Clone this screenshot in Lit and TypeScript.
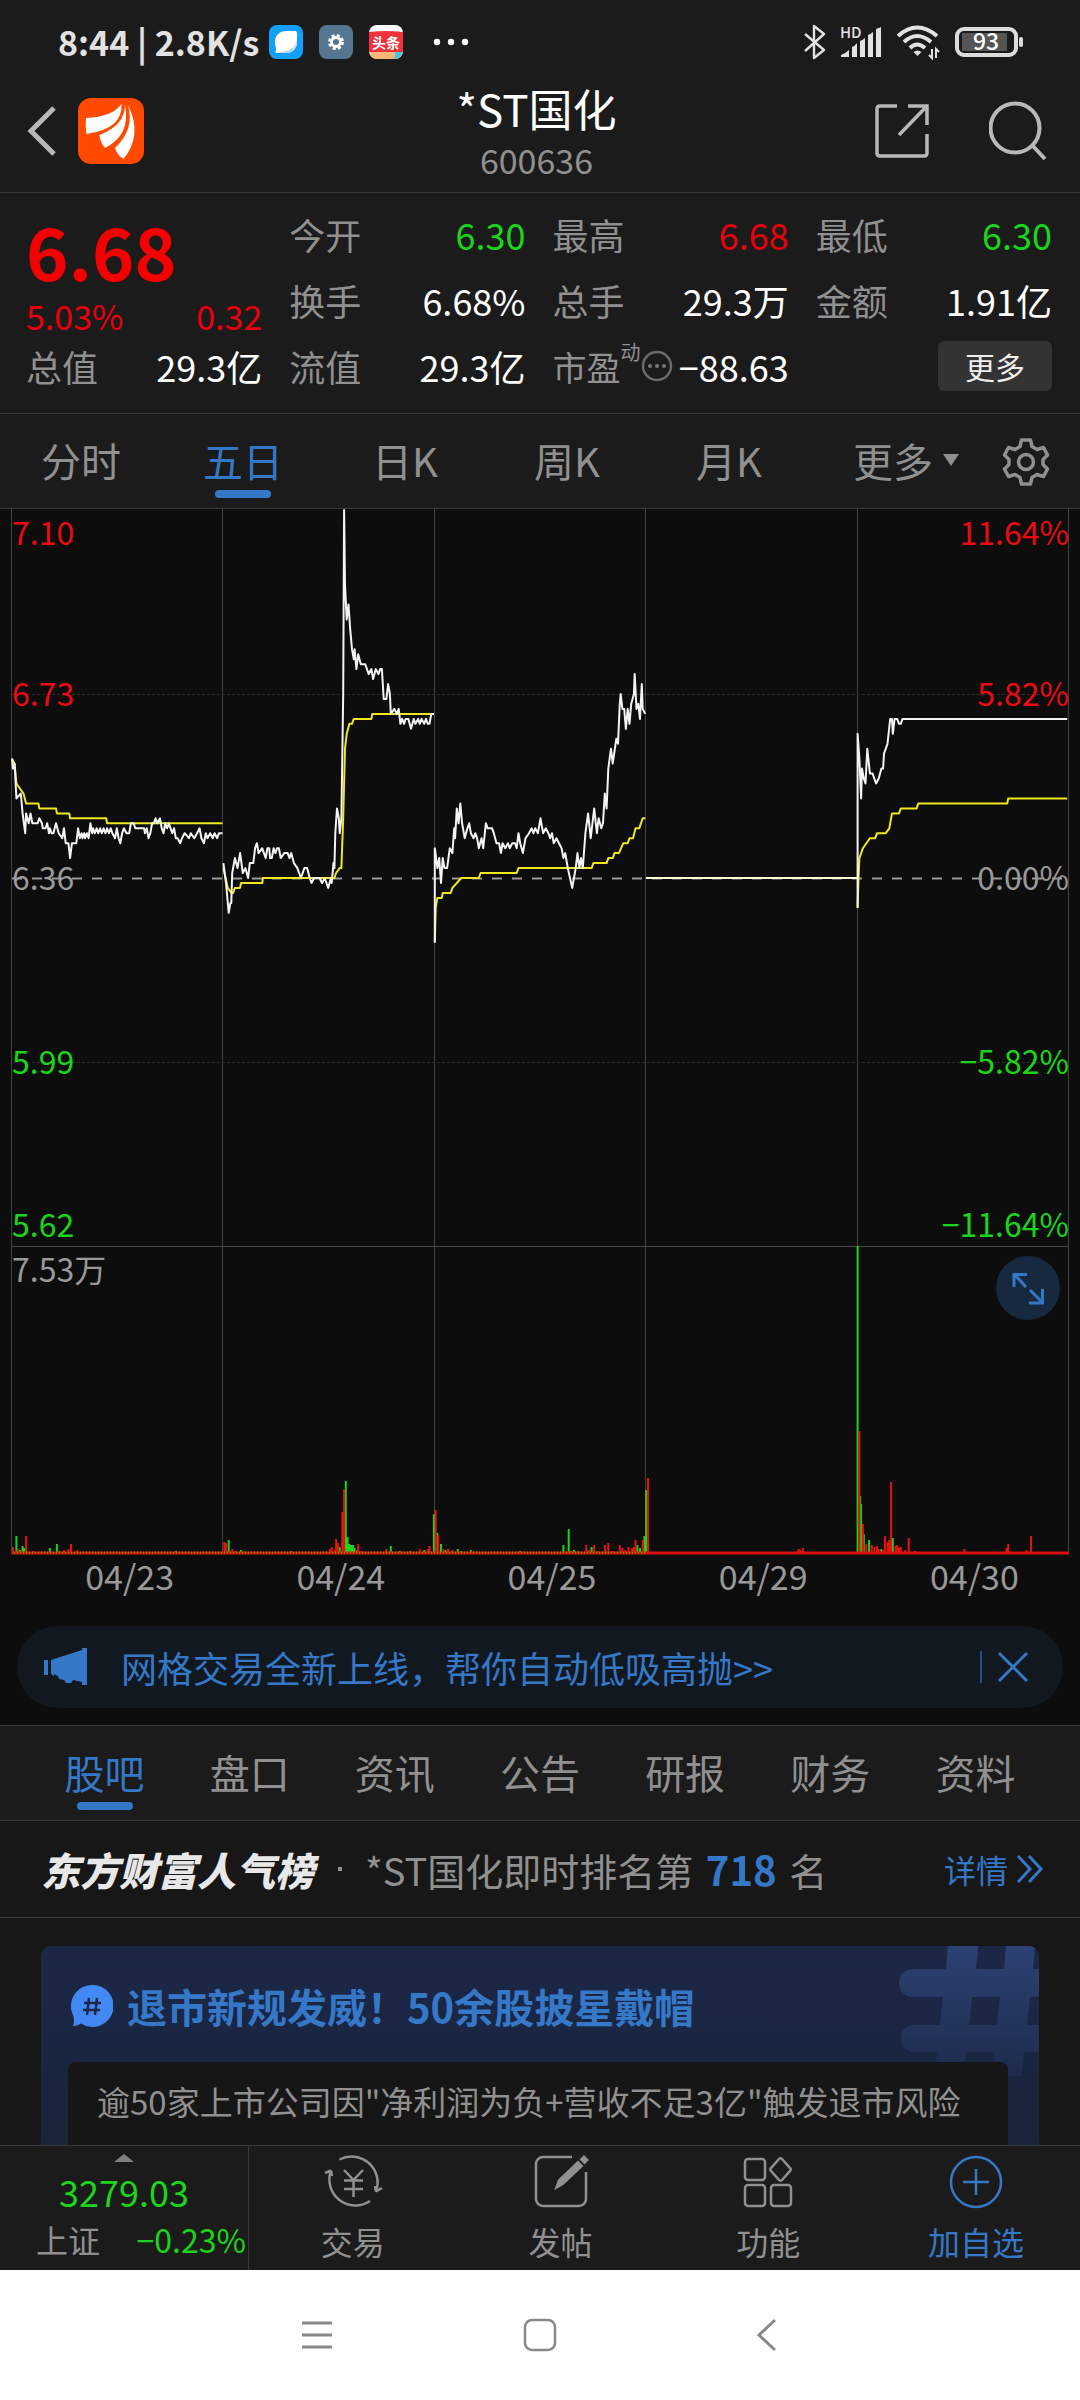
import { LitElement, html, svg, css } from "lit";
import { customElement, property } from "lit/decorators.js";
import { classMap } from "lit/directives/class-map.js";

type Point = [number, number];
type Bar = [number, number, "r" | "g"];

/* One entry for each trading day: [minute, ticks above the previous close]. */
const PRICE: Point[][] = [
  [
    [0, 24], [1, 22], [3, 23], [5, 16], [10, 17], [12, 13], [15, 9], [16, 13], [19, 11], [21, 13], [23, 11],
    [29, 11], [31, 12], [34, 11], [35, 10], [38, 10], [40, 11], [42, 9], [43, 10], [45, 9], [47, 9], [50, 11],
    [53, 9], [57, 8], [59, 10], [61, 7], [64, 7], [66, 4], [68, 7], [73, 7], [75, 10], [77, 8], [79, 9], [80, 8],
    [82, 9], [83, 8], [85, 9], [87, 8], [89, 11], [91, 9], [92, 10], [94, 9], [96, 10], [98, 9], [100, 10],
    [102, 9], [104, 10], [106, 9], [108, 10], [110, 9], [112, 10], [114, 9], [117, 8], [119, 10], [121, 8],
    [123, 7], [125, 9], [127, 10], [130, 9], [133, 9], [135, 11], [138, 11], [140, 10], [150, 10], [151, 9],
    [153, 10], [155, 8], [157, 9], [159, 11], [161, 11], [163, 12], [165, 11], [168, 12], [170, 10], [172, 9],
    [174, 11], [176, 10], [178, 11], [180, 10], [182, 9], [184, 10], [186, 8], [188, 8], [191, 7], [193, 8],
    [196, 9], [201, 8], [203, 9], [207, 8], [210, 9], [213, 10], [215, 8], [218, 7], [220, 9], [222, 8],
    [225, 9], [228, 8], [230, 9], [233, 8], [235, 9], [239, 9],
  ],
  [
    [0, 3], [3, -1], [4, -3], [6, -7], [8, -5], [9, -5], [10, 1], [13, 4], [16, 2], [19, 5], [22, 1], [25, 2],
    [28, 0], [30, 3], [34, 3], [36, 6], [38, 7], [40, 5], [44, 6], [48, 4], [50, 6], [52, 6], [53, 4], [55, 4],
    [57, 6], [59, 5], [61, 6], [63, 6], [65, 4], [69, 5], [73, 5], [75, 4], [77, 5], [80, 3], [84, 2], [88, 0],
    [92, 2], [95, 2], [98, 0], [100, -1], [103, 0], [109, 0], [112, -1], [115, 0], [119, -2], [122, 0],
    [123, -1], [125, 3], [126, 2], [127, 9], [129, 14], [131, 12], [132, 9], [134, 12], [136, 37], [137, 74],
    [138, 59], [140, 52], [142, 55], [144, 50], [146, 46], [148, 44], [149, 46], [151, 42], [153, 45],
    [156, 43], [161, 43], [165, 41], [168, 42], [170, 40], [173, 42], [176, 41], [178, 42], [180, 42],
    [182, 36], [185, 36], [187, 39], [189, 37], [190, 33], [194, 34], [197, 33], [199, 34], [201, 31],
    [203, 32], [205, 31], [207, 32], [210, 32], [213, 30], [216, 32], [218, 31], [221, 32], [223, 31],
    [225, 32], [228, 31], [230, 32], [232, 31], [234, 31], [236, 33], [239, 33],
  ],
  [
    [0, -13], [0, 6], [3, 2], [5, 4], [7, -1], [9, 4], [11, 2], [14, 2], [17, 6], [20, 5], [22, 10], [23, 8],
    [25, 14], [27, 11], [29, 15], [31, 11], [32, 10], [34, 8], [37, 10], [39, 11], [41, 9], [44, 8], [46, 9],
    [48, 8], [50, 6], [53, 8], [55, 6], [58, 11], [60, 10], [65, 10], [67, 9], [70, 7], [73, 7], [75, 5],
    [77, 7], [80, 6], [83, 7], [85, 6], [88, 7], [91, 7], [93, 6], [95, 9], [97, 7], [100, 5], [103, 8],
    [107, 9], [110, 10], [112, 9], [114, 10], [117, 9], [120, 12], [123, 9], [126, 10], [129, 9], [131, 8],
    [133, 9], [135, 7], [138, 8], [141, 7], [144, 6], [146, 4], [148, 5], [151, 2], [156, -2], [160, 2],
    [162, 5], [164, 2], [166, 4], [168, 2], [171, 9], [174, 13], [177, 8], [181, 14], [184, 9], [186, 12],
    [189, 10], [191, 11], [193, 17], [195, 14], [197, 22], [200, 26], [202, 23], [206, 28], [208, 27],
    [210, 35], [211, 37], [213, 34], [215, 34], [217, 30], [219, 34], [221, 31], [223, 35], [226, 37],
    [227, 41], [229, 34], [231, 35], [233, 32], [235, 39], [236, 34], [239, 33],
  ],
  [[0, 0], [240, 0]],
  [
    [0, -6], [0, 29], [2, 24], [4, 16], [5, 22], [7, 20], [9, 19], [11, 26], [14, 21], [17, 21], [19, 20],
    [21, 19], [24, 20], [27, 22], [29, 22], [30, 25], [32, 26], [34, 27], [37, 32], [39, 32], [40, 29],
    [42, 32], [45, 32], [47, 31], [49, 31], [51, 32], [238, 32],
  ],
];

const AVERAGE: Point[][] = [
  [
    [0, 24], [3, 23], [5, 19], [9, 18], [13, 17], [16, 15], [30, 15], [31, 14], [50, 14], [51, 13], [65, 13],
    [66, 12], [107, 12], [108, 11], [239, 11],
  ],
  [
    [0, 2], [5, -2], [9, -3], [11, -3], [13, -2], [19, -2], [20, -1], [44, -1], [45, 0], [126, 0], [128, 1],
    [132, 2], [134, 2], [136, 12], [138, 26], [140, 29], [143, 31], [146, 31], [148, 32], [168, 32], [169, 33],
    [239, 33],
  ],
  [
    [0, -13], [1, -6], [3, -4], [8, -4], [9, -3], [18, -3], [20, -2], [25, -1], [30, 0], [50, 0], [52, 1],
    [93, 1], [95, 2], [178, 2], [180, 3], [195, 3], [197, 4], [202, 4], [204, 5], [209, 5], [214, 7], [219, 7],
    [221, 8], [225, 8], [228, 10], [232, 10], [236, 12], [239, 12],
  ],
  [[0, 0], [240, 0]],
  [
    [0, -6], [1, 0], [2, 4], [6, 6], [10, 7], [14, 8], [20, 8], [22, 9], [32, 9], [36, 10], [39, 13], [47, 13],
    [49, 14], [67, 14], [69, 15], [170, 15], [171, 16], [238, 16],
  ],
];

/* Notable volume bars: [minute, height, colour]. */
const VOLUME: Bar[][] = [
  [
    [1, 7, "r"], [5, 18, "g"], [7, 5, "r"], [9, 4, "g"], [12, 8, "g"], [14, 6, "g"], [16, 18, "r"], [24, 3, "r"],
    [34, 2, "r"], [43, 6, "g"], [51, 10, "g"], [54, 3, "g"], [59, 4, "r"], [64, 5, "r"], [67, 10, "r"],
    [74, 4, "r"], [120, 2, "r"], [186, 3, "g"],
  ],
  [
    [1, 12, "r"], [3, 11, "r"], [6, 14, "g"], [10, 5, "r"], [14, 3, "r"], [20, 4, "g"], [39, 2, "r"],
    [77, 3, "g"], [121, 5, "r"], [123, 7, "r"], [126, 4, "r"], [128, 15, "r"], [130, 11, "r"], [132, 7, "g"],
    [135, 42, "r"], [137, 65, "r"], [139, 73, "g"], [141, 17, "g"], [143, 10, "g"], [145, 9, "g"], [147, 9, "g"],
    [149, 6, "g"], [151, 4, "r"], [153, 10, "r"], [156, 3, "r"], [173, 2, "g"], [185, 5, "r"], [190, 8, "g"],
    [200, 3, "g"], [212, 3, "g"], [223, 5, "r"], [228, 4, "g"], [232, 5, "r"], [234, 8, "r"], [239, 40, "g"],
  ],
  [
    [1, 44, "r"], [3, 21, "g"], [4, 19, "r"], [7, 10, "g"], [10, 5, "r"], [12, 4, "g"], [15, 5, "r"],
    [20, 4, "r"], [26, 5, "g"], [30, 3, "g"], [41, 4, "g"], [54, 2, "r"], [69, 2, "g"], [97, 3, "g"],
    [146, 9, "g"], [152, 25, "g"], [155, 3, "r"], [158, 4, "g"], [163, 3, "r"], [172, 9, "r"], [175, 4, "r"],
    [178, 7, "g"], [181, 9, "r"], [185, 3, "r"], [193, 9, "r"], [197, 11, "r"], [202, 3, "r"], [210, 9, "r"],
    [213, 6, "r"], [216, 4, "r"], [220, 7, "r"], [224, 6, "r"], [226, 7, "r"], [228, 14, "r"], [230, 9, "g"],
    [233, 6, "g"], [236, 14, "r"], [238, 18, "g"], [240, 64, "g"],
  ],
  [[2, 76, "r"], [60, 2, "r"], [173, 5, "r"], [175, 4, "r"], [178, 6, "r"]],
  [
    [0, 308, "g"], [2, 123, "r"], [3, 58, "g"], [4, 50, "g"], [6, 30, "r"], [7, 20, "g"], [10, 10, "r"],
    [13, 14, "g"], [16, 9, "r"], [19, 7, "r"], [22, 8, "r"], [24, 5, "r"], [27, 5, "g"], [29, 4, "r"],
    [31, 18, "r"], [34, 12, "r"], [36, 14, "r"], [38, 72, "r"], [40, 16, "g"], [43, 8, "r"], [45, 9, "r"],
    [47, 6, "r"], [49, 7, "r"], [54, 4, "r"], [58, 16, "r"], [65, 3, "r"], [121, 5, "r"], [169, 6, "r"],
    [171, 10, "r"], [192, 4, "r"], [197, 18, "r"],
  ],
];

const LEFT = 12;
const RIGHT = 1069;
const DAY = (RIGHT - LEFT) / 5;
const CLOSE_Y = 369;
const TICK = 368 / 74;
const PLOT_BOTTOM = 737;
const BASE = 1045;

const xOf = (day: number, minute: number) => LEFT + DAY * (day + minute / 240);

function tracePath(days: Point[][]): string {
  return days
    .map((points, day) =>
      points
        .map(([m, k], i) => `${i ? "L" : "M"}${xOf(day, m).toFixed(1)} ${(CLOSE_Y - k * TICK).toFixed(1)}`)
        .join(""),
    )
    .join("");
}

function volumePath(color: "r" | "g"): string {
  return VOLUME.map((bars, day) =>
    bars
      .filter((b) => b[2] === color)
      .map(([m, h]) => `M${xOf(day, m).toFixed(1)} ${BASE}v${-h}`)
      .join(""),
  ).join("");
}

@customElement("price-chart")
export class PriceChart extends LitElement {
  static styles = css`
    :host {
      display: block;
      background: #0d0d0d;
      color: #999;
    }
    .plot {
      position: relative;
    }
    .plot > svg {
      display: block;
      width: 100%;
      height: auto;
      overflow: visible;
    }
    text {
      font-size: 32px;
      fill: #999;
    }
    .up {
      fill: #ea0a12;
    }
    .down {
      fill: #1bd41b;
    }
    .end {
      text-anchor: end;
    }
    .expand {
      position: absolute;
      top: 747px;
      right: 20px;
      width: 64px;
      height: 64px;
      padding: 0;
      border: 0;
      border-radius: 50%;
      background: #17293f;
      display: grid;
      place-items: center;
    }
    .dates {
      display: grid;
      grid-template-columns: repeat(5, 1fr);
      padding-left: 24px;
      text-align: center;
      font-size: 34px;
      line-height: 40px;
    }
  `;

  render() {
    const columns = [0, 1, 2, 3, 4, 5].map((i) => Math.round(LEFT + DAY * i) - 0.5);
    return html`
      <div class="plot">
        <svg viewBox="0 0 1080 1047" role="img" aria-label="五日走势图">
          ${columns.map((x) => svg`<path d="M${x} 0V${BASE}" stroke="#424242" />`)}
          <path d="M12 185.5H1069M12 553.5H1069" stroke="#2c2c2c" stroke-dasharray="3 2" />
          <path d="M12 ${PLOT_BOTTOM + 0.5}H1069" stroke="#484848" />
          <path d="M12 369.5H1069" stroke="#999" stroke-width="2" stroke-dasharray="10 10" />
          <path d=${tracePath(AVERAGE)} fill="none" stroke="#f0e81e" stroke-width="2" stroke-linejoin="round" />
          <path d=${tracePath(PRICE)} fill="none" stroke="#f4f4f4" stroke-width="2" stroke-linejoin="round" />
          <path d="M${xOf(3, 0)} 369H${xOf(4, 0)}" stroke="#fbfbd8" stroke-width="2" />
          <path d=${volumePath("g")} stroke="#19d419" stroke-width="2" />
          <path d=${volumePath("r")} stroke="#e81010" stroke-width="2" />
          <path d="M12 1044H646" stroke="#cf1c08" stroke-width="3" />
          <path d="M14 1043.5H646" stroke="#7a8a10" stroke-width="2" stroke-dasharray="1 2" />
          <path d="M646 1044H1069" stroke="#d81010" stroke-width="3" />
          <text class="up" x="12" y="36">7.10</text>
          <text class="up" x="12" y="197">6.73</text>
          <text x="12" y="381">6.36</text>
          <text class="down" x="12" y="565">5.99</text>
          <text class="down" x="12" y="728">5.62</text>
          <text x="12" y="773">7.53万</text>
          <text class="up end" x="1069" y="36">11.64%</text>
          <text class="up end" x="1069" y="197">5.82%</text>
          <text class="end" x="1069" y="381">0.00%</text>
          <text class="down end" x="1069" y="565">−5.82%</text>
          <text class="down end" x="1069" y="728">−11.64%</text>
        </svg>
        <button class="expand" aria-label="全屏">
          <svg width="34" height="34" viewBox="0 0 34 34" fill="none" stroke="#3578c8" stroke-width="3">
            <path d="M3 16V3.500H16M4 4l11 12M18 32h13.500V18M31 31L19 19" />
          </svg>
        </button>
      </div>
      <div class="dates">
        ${["04/23", "04/24", "04/25", "04/29", "04/30"].map((d) => html`<span>${d}</span>`)}
      </div>
    `;
  }
}

@customElement("stock-tabs")
export class StockTabs extends LitElement {
  @property({ type: Array }) items: string[] = [];
  @property({ type: Number }) active = 0;
  @property({ type: Boolean, reflect: true }) chart = false;

  static styles = css`
    :host {
      display: block;
      background: #1b1b1b;
      border-bottom: 1px solid #3a3a3a;
    }
    .tabs {
      display: grid;
      grid-auto-flow: column;
      grid-auto-columns: 1fr;
      height: 94px;
      padding: 0 32px;
    }
    .tabs.chart {
      grid-auto-flow: row;
      grid-template-columns: repeat(5, 15%) 1fr auto;
      padding: 0;
    }
    button {
      display: flex;
      flex-direction: column;
      align-items: center;
      justify-content: flex-end;
      gap: 4px;
      padding: 0 0 10px;
      border: 0;
      background: none;
      color: #909090;
      font: inherit;
      font-size: 40px;
      line-height: 52px;
    }
    button::after {
      content: "";
      width: 56px;
      height: 8px;
      border-radius: 4px;
    }
    button.active {
      color: #3578c8;
    }
    button.active::after {
      background: #3578c8;
    }
    .more {
      display: flex;
      align-items: center;
      gap: 10px;
    }
    .gear::after {
      display: none;
    }
    .gear {
      justify-content: center;
      padding: 2px 30px 0 0;
    }
  `;

  render() {
    return html`
      <nav class=${classMap({ tabs: true, chart: this.chart })}>
        ${this.items.map(
          (t, i) => html`<button class=${classMap({ active: i === this.active })}>${t}</button>`,
        )}
        ${this.chart
          ? html`
              <button>
                <span class="more">
                  更多
                  <svg width="16" height="12" viewBox="0 0 16 12"><path d="M0 0H16L8 12Z" fill="#909090" /></svg>
                </span>
              </button>
              <button class="gear" aria-label="设置">
                <svg width="48" height="50" viewBox="0 0 48 50" fill="none" stroke="#909090" stroke-width="3.500" stroke-linejoin="round">
                  <path d="M19.500 3h9l1.500 6.500 5 3 6.500-2 4 7.500-4.500 4.500v5l4.500 4.500-4 7.500-6.500-2-5 3L28.500 47h-9L18 40.500l-5-3-6.500 2-4-7.500L7 27.500v-5L2.500 18l4-7.500 6.500 2 5-3z" />
                  <circle cx="24" cy="25" r="7.500" />
                </svg>
              </button>
            `
          : null}
      </nav>
    `;
  }
}

const ICONS = {
  trade: svg`
    <path d="M17.500 6.500A26 26 0 0 1 54 38.500M54 38.500l6-3.500M54 38.500L53 33M48 48A26 26 0 0 1 9 17.500M9 17.500L3 20M9 17.500L10 23" transform="translate(-1)" />
    <path d="M21 17l9.500 10L40 17M21 27.500H40M21 36H40M30.500 27V44" />`,
  post: svg`
    <path d="M41 4H12A7 7 0 0 0 5 11V46a7 7 0 0 0 7 7H48a7 7 0 0 0 7-7V19" />
    <path d="M25 35l3-8L47 9l4 4L32 31zM50 6.500l3-3 3.500 3.500-3 3z" fill="#909090" stroke-width="2" />`,
  functions: svg`
    <rect x="7" y="6" width="20" height="21" rx="3" />
    <rect x="7" y="32" width="20" height="21" rx="3" />
    <rect x="33" y="32" width="20" height="21" rx="3" />
    <path d="M41 6l-8 9a2 2 0 0 0 0 3l8 9a2 2 0 0 0 3 0l8-9a2 2 0 0 0 0-3l-8-9a2 2 0 0 0-3 0z" />`,
  add: svg`<circle cx="30" cy="29" r="25" /><path d="M30 16V42M17 29H43" />`,
};

@customElement("app-root")
export class AppRoot extends LitElement {
  static styles = css`
    :host {
      display: flex;
      flex-direction: column;
      min-height: 100vh;
      background: #171717;
      color: #909090;
      font-family: "Noto Sans CJK SC", "Noto Sans", sans-serif;
      font-size: 36px;
    }
    button {
      border: 0;
      padding: 0;
      background: none;
      color: inherit;
      font: inherit;
    }
    svg {
      display: block;
      flex: none;
    }
    a {
      color: #3578c8;
      text-decoration: none;
    }
    .status {
      display: flex;
      align-items: center;
      height: 84px;
      padding: 0 56px 0 58px;
      background: #1b1b1b;
      color: #e2e2e2;
    }
    .status svg {
      overflow: visible;
    }
    .clock {
      font-size: 34px;
      font-weight: 700;
      line-height: 40px;
      margin-right: auto;
      display: flex;
      align-items: center;
      gap: 16px;
    }
    .clock .net {
      margin-right: -6px;
    }
    .radio {
      display: flex;
      align-items: center;
      gap: 14px;
    }
    .header {
      display: grid;
      grid-template-columns: 1fr auto 1fr;
      height: 108px;
      padding: 0 33px 0 26px;
      background: #1b1b1b;
      border-bottom: 1px solid #3a3a3a;
    }
    .side {
      display: flex;
      align-items: center;
      gap: 20px;
      padding-bottom: 14px;
    }
    .side.tools {
      justify-content: flex-end;
      gap: 60px;
    }
    .title {
      text-align: center;
    }
    h1 {
      margin: 0;
      color: #fff;
      font-size: 44px;
      font-weight: 400;
      line-height: 48px;
    }
    .code {
      font-size: 34px;
      line-height: 56px;
    }
    .quote {
      display: grid;
      grid-template-columns: repeat(4, 1fr);
      grid-auto-rows: 66px;
      column-gap: 27px;
      margin: 0;
      padding: 8px 28px 14px 26px;
      background: #1b1b1b;
      border-bottom: 1px solid #3a3a3a;
    }
    .last {
      grid-row: span 2;
      color: #f50000;
    }
    .price {
      font-size: 72px;
      font-weight: 700;
      line-height: 98px;
    }
    .change {
      display: flex;
      justify-content: space-between;
      color: #e8000d;
      font-size: 34px;
      line-height: 34px;
    }
    .pair {
      display: flex;
      align-items: center;
      justify-content: space-between;
      white-space: nowrap;
    }
    dd {
      margin: 0;
      color: #fff;
    }
    dt {
      display: flex;
      align-items: center;
    }
    sup {
      align-self: flex-start;
      font-size: 20px;
      line-height: 20px;
    }
    .pe {
      font-size: 34px;
    }
    .up {
      color: #e8000d;
    }
    .down {
      color: #1bd41b;
    }
    .more {
      justify-self: end;
      align-self: center;
      width: 114px;
      height: 50px;
      border-radius: 6px;
      background: #333;
      color: #eee;
      font-size: 30px;
      line-height: 46px;
    }
    .promo {
      display: flex;
      align-items: center;
      height: 82px;
      margin: 30px 17px 17px;
      padding: 0 34px 0 27px;
      border-radius: 41px;
      background: #121820;
      color: #3578c8;
    }
    .promo a {
      flex: 1;
      margin-left: 33px;
      line-height: 46px;
    }
    .promo button {
      border-left: 2px solid #24507f;
      padding-left: 15px;
    }
    .market {
      background: #0d0d0d;
      border-bottom: 1px solid #3a3a3a;
    }
    .rank {
      display: flex;
      align-items: center;
      height: 96px;
      padding: 0 36px 0 41px;
      border-bottom: 1px solid #3a3a3a;
      font-size: 38px;
      white-space: nowrap;
    }
    .rank strong {
      color: #e8e8e8;
      font-size: 39px;
      font-weight: 900;
      font-style: italic;
    }
    .dot {
      width: 4px;
      height: 4px;
      margin: 0 23px 0 24px;
      background: #909090;
    }
    .rank b {
      margin: 0 4px;
      color: #3578c8;
      font-size: 40px;
      line-height: 40px;
    }
    .rank a {
      display: flex;
      align-items: center;
      gap: 8px;
      margin-left: auto;
      font-size: 32px;
    }
    .feed {
      flex: 1;
      display: flex;
      padding: 28px 41px 0;
    }
    .card {
      flex: 1;
      position: relative;
      display: flex;
      flex-direction: column;
      overflow: hidden;
      padding: 0 31px 0 27px;
      border-radius: 10px 10px 0 0;
      background: linear-gradient(#1c2747, #192640 60%, #1a2438);
    }
    .hash {
      position: absolute;
      top: 0;
      right: 0;
    }
    h2 {
      display: flex;
      align-items: center;
      gap: 14px;
      height: 116px;
      box-sizing: border-box;
      margin: 0;
      padding: 4px 0 0 3px;
      color: #3578c8;
      font-size: 40px;
      font-weight: 700;
      white-space: nowrap;
    }
    .summary {
      flex: 1;
      position: relative;
      margin: 0;
      padding: 14px 29px 18px;
      border-radius: 8px 8px 0 0;
      background: #161616;
      font-size: 33px;
      line-height: 50px;
      white-space: nowrap;
    }
    .bottom {
      display: grid;
      grid-template-columns: 249px repeat(4, 1fr);
      height: 124px;
      background: #1b1b1b;
      border-top: 1px solid #3a3a3a;
    }
    .index {
      display: flex;
      flex-direction: column;
      align-items: center;
      padding-top: 8px;
      border-right: 1px solid #3a3a3a;
      color: #1bd41b;
    }
    .index .value {
      line-height: 46px;
      padding-top: 6px;
    }
    .index .row {
      align-self: stretch;
      display: flex;
      justify-content: space-between;
      padding: 2px 2px 0 36px;
      font-size: 32px;
      line-height: 46px;
    }
    .index .name {
      color: #909090;
    }
    .action {
      display: flex;
      flex-direction: column;
      align-items: center;
      padding-top: 7px;
      gap: 7px;
      font-size: 32px;
      line-height: 46px;
    }
    .action.primary {
      color: #3578c8;
    }
    .system {
      display: flex;
      align-items: center;
      justify-content: space-between;
      height: 130px;
      padding: 0 296px;
      background: #fff;
      color: #888;
    }
  `;

  private pair(label: string, value: string, tone = "") {
    return html`<div class="pair"><dt>${label}</dt><dd class=${tone}>${value}</dd></div>`;
  }

  private action(label: string, icon: unknown, primary = false) {
    return html`
      <button class=${classMap({ action: true, primary })}>
        <svg width="60" height="58" viewBox="0 0 60 58" fill="none" stroke="currentColor" stroke-width="2.500">${icon}</svg>
        <span>${label}</span>
      </button>
    `;
  }

  render() {
    return html`
      <div class="status">
        <div class="clock">
          <span class="net">8:44 | 2.8K/s</span>
          <svg width="34" height="34" viewBox="0 0 34 34">
            <rect width="34" height="34" rx="8" fill="#12a0fa" />
            <path d="M6 17C6 9 12 6 18 6h8c2 0 2 2 2 4v7c0 7-5 11-11 11-3 0-4-1-6 0H7c-1-1 0-3 0-5-1-2-1-4-1-6z" fill="#fff" />
            <path d="M28 15C27 22 22 25 13 27c8 4 16-4 15-12z" fill="#bfd3f5" />
          </svg>
          <svg width="34" height="34" viewBox="0 0 34 34">
            <rect width="34" height="34" rx="8" fill="#557591" />
            <circle cx="17" cy="17" r="4.500" fill="none" stroke="#fff" stroke-width="3" />
            <circle cx="17" cy="17" r="6.500" fill="none" stroke="#fff" stroke-width="3" stroke-dasharray="3 2.100" />
          </svg>
          <svg width="34" height="34" viewBox="0 0 34 34">
            <rect width="34" height="34" rx="8" fill="#fff" />
            <path d="M0 7Q17 5 34 7V27H0z" fill="#f0323c" />
            <path d="M1 27H33Q32 34 26 34H8Q2 34 1 27z" fill="#f7b877" />
            <path d="M27 27h6q-1 7-8 7z" fill="#3cc8e6" />
            <text x="17" y="23" text-anchor="middle" font-size="14" font-weight="700" fill="#fff">头条</text>
          </svg>
          <svg width="64" height="8" viewBox="0 0 64 8" fill="#fff">
            <circle cx="18" cy="4" r="3.200" /><circle cx="32" cy="4" r="3.200" /><circle cx="46" cy="4" r="3.200" />
          </svg>
        </div>
        <div class="radio">
          <svg width="22" height="36" viewBox="0 0 22 36" fill="none" stroke="#e2e2e2" stroke-width="2.400" stroke-linejoin="round">
            <path d="M1 10L20 26L10 34V2L20 10L1 27" />
          </svg>
          <svg width="42" height="32" viewBox="0 0 42 32" fill="#e2e2e2">
            <path d="M1 31v-2q5-2 8-5v7zM12 31V21q3-1 5-4v14zM20 31V15q3-1 5-3v19zM28 31V9q3-1 5-3v25zM36 31V3q3-1 5-2v30z" />
            <text x="0" y="12" font-size="15" font-weight="500">HD</text>
          </svg>
          <svg width="44" height="36" viewBox="0 0 44 36" fill="none" stroke="#e2e2e2" stroke-width="4">
            <path d="M2 12Q21-5 41 12M8 18Q21 6 35 18M14 24Q21 17 29 24" />
            <path d="M21.500 32l-4-4q4-3 8 0z" fill="#e2e2e2" stroke="none" />
            <path d="M36 25v9l-3-3M40 34v-9l3 3" stroke-width="2" />
          </svg>
          <svg width="70" height="32" viewBox="0 0 70 32">
            <rect x="3" y="3" width="59" height="26" rx="7" fill="none" stroke="#dcdcdc" stroke-width="4" />
            <rect x="8" y="7" width="45" height="18" fill="#555" />
            <rect x="65" y="11" width="4" height="10" rx="2" fill="#dcdcdc" />
            <text x="32" y="24" text-anchor="middle" font-size="23" font-weight="500" fill="#fff">93</text>
          </svg>
        </div>
      </div>

      <header class="header">
        <div class="side">
          <button aria-label="返回">
            <svg width="32" height="52" viewBox="0 0 32 52" fill="none" stroke="#b8b8b8" stroke-width="5">
              <path d="M28 3L5 26L28 49" />
            </svg>
          </button>
          <svg width="66" height="66" viewBox="0 0 66 66">
            <rect width="66" height="66" rx="13" fill="#ff4a00" />
            <path d="M8 20Q34 19 43.500 6Q45 31 8.500 36Q7 28 8 20z" fill="#fff" />
            <path d="M47 7Q47 27 21.500 37Q22 44 27 50Q53 37 47 7z" fill="#fff" />
            <path d="M50 7Q57 31 37 50Q39 57 45.500 61Q65 37 50 7z" fill="#fff" />
          </svg>
        </div>
        <div class="title">
          <h1>*ST国化</h1>
          <div class="code">600636</div>
        </div>
        <div class="side tools">
          <button aria-label="分享">
            <svg width="54" height="54" viewBox="0 0 54 54" fill="none" stroke="#b8b8b8" stroke-width="3.500">
              <path d="M22 2H5Q2 2 2 5V49Q2 52 5 52H49Q52 52 52 49V30M33 2H52V21M51 3L24 31" />
            </svg>
          </button>
          <button aria-label="搜索">
            <svg width="58" height="60" viewBox="0 0 58 60" fill="none" stroke="#b8b8b8" stroke-width="4">
              <circle cx="26" cy="27" r="24.500" /><path d="M43 44L56 58" />
            </svg>
          </button>
        </div>
      </header>

      <dl class="quote">
        <div class="last">
          <div class="price">6.68</div>
          <div class="change"><span>5.03%</span><span>0.32</span></div>
        </div>
        ${this.pair("今开", "6.30", "down")} ${this.pair("最高", "6.68", "up")} ${this.pair("最低", "6.30", "down")}
        ${this.pair("换手", "6.68%")} ${this.pair("总手", "29.3万")} ${this.pair("金额", "1.91亿")}
        ${this.pair("总值", "29.3亿")} ${this.pair("流值", "29.3亿")}
        <div class="pair">
          <dt class="pe">
            市盈<sup>动</sup>
            <svg width="32" height="32" viewBox="0 0 32 32">
              <circle cx="16" cy="16" r="14" fill="none" stroke="#6a6a6a" stroke-width="2.500" />
              <circle cx="9" cy="16" r="2" fill="#777" /><circle cx="16" cy="16" r="2" fill="#777" /><circle cx="23" cy="16" r="2" fill="#777" />
            </svg>
          </dt>
          <dd>−88.63</dd>
        </div>
        <button class="more">更多</button>
      </dl>

      <stock-tabs chart .items=${["分时", "五日", "日K", "周K", "月K"]} .active=${1}></stock-tabs>

      <section class="market">
        <price-chart></price-chart>
        <div class="promo">
          <svg width="44" height="38" viewBox="0 0 44 38" fill="#3578c8">
            <path d="M0 12h4v15H0zM7 12l3-1v17l-2-1-1-2zM10 11L38 2V0h5v37h-5v-3l-9-2-2 3h-5l-2-3-5-1-1-3-4-2z" />
          </svg>
          <a href="#grid">网格交易全新上线，帮你自动低吸高抛&gt;&gt;</a>
          <button aria-label="关闭">
            <svg width="32" height="32" viewBox="0 0 32 32" fill="none" stroke="#3578c8" stroke-width="3">
              <path d="M2 2L30 30M30 2L2 30" />
            </svg>
          </button>
        </div>
      </section>

      <stock-tabs .items=${["股吧", "盘口", "资讯", "公告", "研报", "财务", "资料"]}></stock-tabs>

      <div class="rank">
        <strong>东方财富人气榜</strong>
        <span class="dot"></span>
        <span>*ST国化即时排名第 <b>718</b> 名</span>
        <a href="#rank">
          详情
          <svg width="28" height="30" viewBox="0 0 28 30" fill="none" stroke="#3578c8" stroke-width="3">
            <path d="M2 2L14 15L2 28M13 2L25 15L13 28" />
          </svg>
        </a>
      </div>

      <main class="feed">
        <article class="card">
          <svg class="hash" width="140" height="130" viewBox="0 0 140 130">
            <defs>
              <linearGradient id="fade" x1="0" y1="0" x2="0" y2="130" gradientUnits="userSpaceOnUse">
                <stop offset="0" stop-color="#2c4273" /><stop offset="1" stop-color="#1e2b4c" />
              </linearGradient>
            </defs>
            <path fill="url(#fade)" d="M49 0H79L77 23H105L107 0H136L134 23H140V51H131L128 79H140V106H125L123 130H94L96 106H67L65 130H36L38 106H15A13 13 0 0 1 15 79H41L44 51H14A14 14 0 0 1 14 23H47ZM73 51L70 79H98L101 51Z" />
          </svg>
          <h2>
            <svg width="42" height="42" viewBox="0 0 42 42">
              <path d="M21 0a21 21 0 1 1-11 38.500Q6 41 2 41q2-5 0-11A21 21 0 0 1 21 0z" fill="#4389f5" />
              <path d="M18 13L16 30M26 13L24 30M13 18H30M12 25H29" fill="none" stroke="#1c2747" stroke-width="2.500" />
            </svg>
            退市新规发威！50余股披星戴帽
          </h2>
          <p class="summary">逾50家上市公司因"净利润为负+营收不足3亿"触发退市风险</p>
        </article>
      </main>

      <div class="bottom">
        <button class="index">
          <svg width="20" height="8" viewBox="0 0 20 8"><path d="M0 8L10 0L20 8z" fill="#808080" /></svg>
          <span class="value">3279.03</span>
          <span class="row"><span class="name">上证</span><span>−0.23%</span></span>
        </button>
        ${this.action("交易", ICONS.trade)} ${this.action("发帖", ICONS.post)}
        ${this.action("功能", ICONS.functions)} ${this.action("加自选", ICONS.add, true)}
      </div>

      <div class="system">
        <button aria-label="菜单">
          <svg width="42" height="34" viewBox="0 0 42 34" stroke="currentColor" stroke-width="3">
            <path d="M6 5H36M6 17H36M6 29H36" />
          </svg>
        </button>
        <button aria-label="主页">
          <svg width="42" height="34" viewBox="0 0 42 34" fill="none" stroke="currentColor" stroke-width="2.500">
            <rect x="6" y="2" width="30" height="30" rx="7" />
          </svg>
        </button>
        <button aria-label="后退">
          <svg width="42" height="34" viewBox="0 0 42 34" fill="none" stroke="currentColor" stroke-width="3">
            <path d="M33 2L17 17L33 32" />
          </svg>
        </button>
      </div>
    `;
  }
}
